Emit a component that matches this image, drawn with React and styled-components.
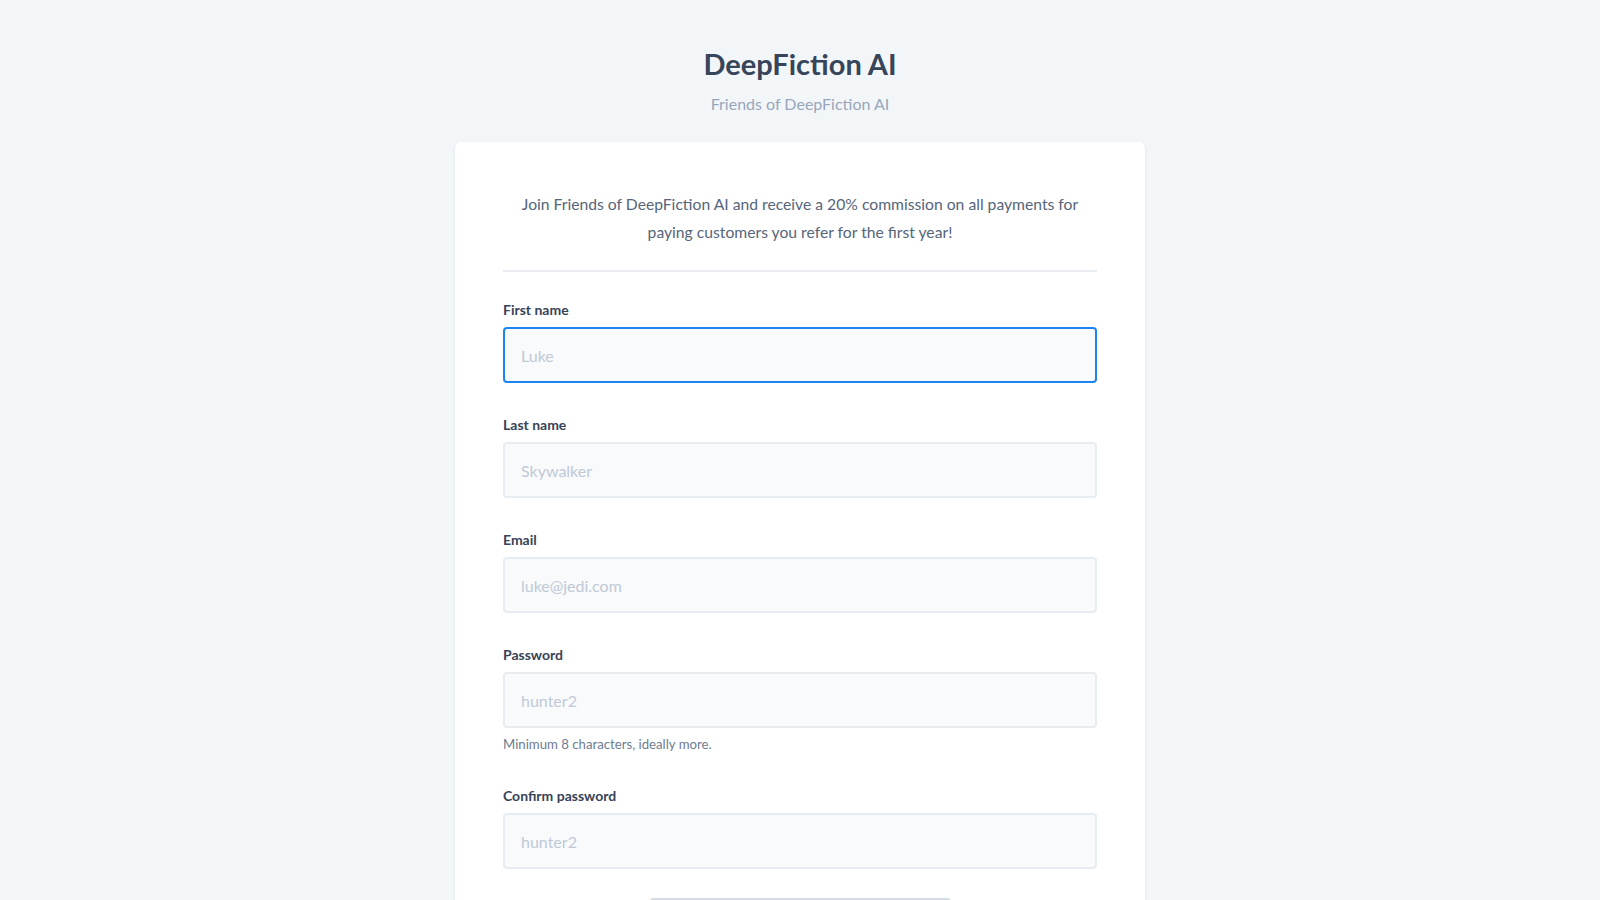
import React from "react";
import styled, { createGlobalStyle } from "styled-components";

const GlobalStyle = createGlobalStyle`
  html, body {
    margin: 0;
    padding: 0;
    background: #f3f6f9;
    font-family: Lato, "Noto Sans", sans-serif;
    -webkit-font-smoothing: antialiased;
  }
  * {
    box-sizing: border-box;
  }
`;

const Page = styled.div`
  min-height: 100vh;
  display: flex;
  flex-direction: column;
  align-items: center;
  padding: 46px 16px 48px;
`;

const Header = styled.header`
  display: flex;
  flex-direction: column;
  align-items: center;
  margin-bottom: 26px;
`;

const Title = styled.h1`
  margin: 0;
  font-size: 29px;
  line-height: 36px;
  font-weight: 700;
  color: #364559;
`;

const Subtitle = styled.p`
  margin: 10px 0 0;
  font-size: 16px;
  line-height: 24px;
  color: #97a6ba;
`;

const Card = styled.main`
  width: 690px;
  background: #ffffff;
  border-radius: 6px;
  box-shadow: 0 1px 3px rgba(15, 23, 42, 0.08), 0 1px 2px rgba(15, 23, 42, 0.04);
  padding: 48px;
`;

const Intro = styled.p`
  margin: 0;
  padding: 0 8px 24px;
  text-align: center;
  font-size: 15.7px;
  line-height: 28px;
  color: #56657a;
  border-bottom: 2px solid #e9edf2;
`;

const Form = styled.form`
  display: flex;
  flex-direction: column;
  gap: 32px;
  padding-top: 28px;
`;

const Field = styled.div`
  display: flex;
  flex-direction: column;
`;

const Label = styled.label`
  font-size: 14px;
  line-height: 20px;
  font-weight: 700;
  color: #374357;
  margin-bottom: 7px;
`;

const Input = styled.input`
  width: 100%;
  height: 56px;
  padding: 15px 16px;
  font-family: inherit;
  font-size: 16px;
  line-height: 20px;
  color: #1f2937;
  background: #f8fafc;
  border: 2px solid #e7ecf1;
  border-radius: 4px;
  outline: none;
  caret-color: #111827;

  &::placeholder {
    color: #bfc9d6;
  }

  &:focus {
    border-color: #1d84f5;
  }
`;

const Help = styled.p`
  margin: 6px 0 0;
  font-size: 13.2px;
  line-height: 20px;
  color: #6e7c90;
`;

const Actions = styled.div`
  display: flex;
  justify-content: center;
  margin-top: -3px;
`;

const SubmitButton = styled.button`
  width: 301px;
  height: 48px;
  font-family: inherit;
  font-size: 16px;
  font-weight: 700;
  color: #374357;
  background: #ffffff;
  border: 2px solid #d5dbe3;
  border-radius: 4px;
  cursor: pointer;
`;

const fields = [
  { id: "first", label: "First name", placeholder: "Luke", type: "text" },
  { id: "last", label: "Last name", placeholder: "Skywalker", type: "text" },
  { id: "email", label: "Email", placeholder: "luke@jedi.com", type: "email" },
  {
    id: "password",
    label: "Password",
    placeholder: "hunter2",
    type: "password",
    help: "Minimum 8 characters, ideally more.",
  },
  { id: "confirm", label: "Confirm password", placeholder: "hunter2", type: "password" },
];

const App = () => {
  return (
    <>
      <GlobalStyle />
      <Page>
        <Header>
          <Title>DeepFiction AI</Title>
          <Subtitle>Friends of DeepFiction AI</Subtitle>
        </Header>
        <Card>
          <Intro>
            Join Friends of DeepFiction AI and receive a 20% commission on all
            payments for paying customers you refer for the first year!
          </Intro>
          <Form onSubmit={(e) => e.preventDefault()}>
            {fields.map((f, i) => (
              <Field key={f.id}>
                <Label htmlFor={f.id}>{f.label}</Label>
                <Input
                  id={f.id}
                  type={f.type}
                  placeholder={f.placeholder}
                  autoFocus={i === 0}
                />
                {f.help && <Help>{f.help}</Help>}
              </Field>
            ))}
            <Actions>
              <SubmitButton type="submit">Sign up</SubmitButton>
            </Actions>
          </Form>
        </Card>
      </Page>
    </>
  );
};

export default App;
